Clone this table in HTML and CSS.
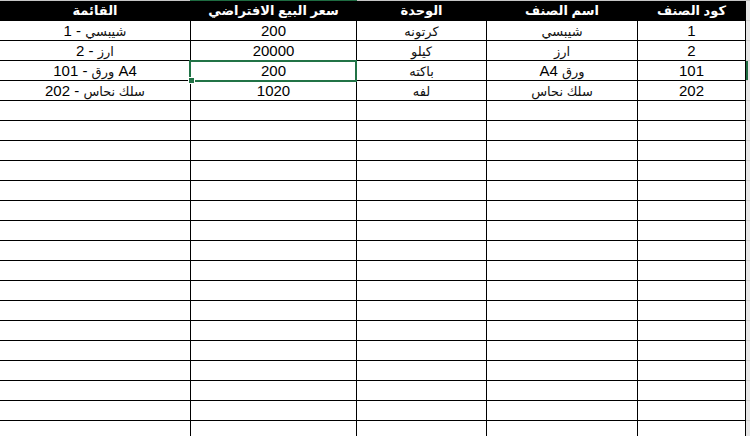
FILE: index.html
```html
<!DOCTYPE html>
<html lang="ar">
<head>
<meta charset="utf-8">
<link rel="stylesheet" href="styles.css">
</head>
<body>
<div class="sheet">
  <div class="colbar">
    <span class="cb cb-a"></span><span class="cb cb-sel"></span><span class="cb cb-b"></span>
  </div>
  <div class="main">
    <div class="grid" dir="rtl">
      <div class="c h">كود الصنف</div>
      <div class="c h">اسم الصنف</div>
      <div class="c h">الوحدة</div>
      <div class="c h">سعر البيع الافتراضي</div>
      <div class="c h last">القائمة</div>

      <div class="c">1</div><div class="c"><span class="ar">شيبسي</span></div><div class="c"><span class="ar">كرتونه</span></div><div class="c">200</div><div class="c last"><span class="ar">شيبسي</span> - 1</div>
      <div class="c">2</div><div class="c"><span class="ar">ارز</span></div><div class="c"><span class="ar">كيلو</span></div><div class="c">20000</div><div class="c last"><span class="ar">ارز</span> - 2</div>
      <div class="c">101</div><div class="c"><span class="ar">ورق</span> A4</div><div class="c"><span class="ar">باكته</span></div><div class="c sel">200<span class="handle"></span></div><div class="c last">A4 <span class="ar">ورق</span> - 101</div>
      <div class="c">202</div><div class="c"><span class="ar">سلك نحاس</span></div><div class="c"><span class="ar">لفه</span></div><div class="c">1020</div><div class="c last"><span class="ar">سلك نحاس</span> - 202</div>

      <div class="c"></div><div class="c"></div><div class="c"></div><div class="c"></div><div class="c last"></div>
      <div class="c"></div><div class="c"></div><div class="c"></div><div class="c"></div><div class="c last"></div>
      <div class="c"></div><div class="c"></div><div class="c"></div><div class="c"></div><div class="c last"></div>
      <div class="c"></div><div class="c"></div><div class="c"></div><div class="c"></div><div class="c last"></div>
      <div class="c"></div><div class="c"></div><div class="c"></div><div class="c"></div><div class="c last"></div>
      <div class="c"></div><div class="c"></div><div class="c"></div><div class="c"></div><div class="c last"></div>
      <div class="c"></div><div class="c"></div><div class="c"></div><div class="c"></div><div class="c last"></div>
      <div class="c"></div><div class="c"></div><div class="c"></div><div class="c"></div><div class="c last"></div>
      <div class="c"></div><div class="c"></div><div class="c"></div><div class="c"></div><div class="c last"></div>
      <div class="c"></div><div class="c"></div><div class="c"></div><div class="c"></div><div class="c last"></div>
      <div class="c"></div><div class="c"></div><div class="c"></div><div class="c"></div><div class="c last"></div>
      <div class="c"></div><div class="c"></div><div class="c"></div><div class="c"></div><div class="c last"></div>
      <div class="c"></div><div class="c"></div><div class="c"></div><div class="c"></div><div class="c last"></div>
      <div class="c"></div><div class="c"></div><div class="c"></div><div class="c"></div><div class="c last"></div>
      <div class="c"></div><div class="c"></div><div class="c"></div><div class="c"></div><div class="c last"></div>
      <div class="c"></div><div class="c"></div><div class="c"></div><div class="c"></div><div class="c last"></div>
      <div class="c"></div><div class="c"></div><div class="c"></div><div class="c"></div><div class="c last"></div>
    </div>
    <div class="rowbar">
      <span class="rb"></span><span class="rb"></span><span class="rb"></span><span class="rb rb-sel"></span>
      <span class="rb"></span><span class="rb"></span><span class="rb"></span><span class="rb"></span>
      <span class="rb"></span><span class="rb"></span><span class="rb"></span><span class="rb"></span>
      <span class="rb"></span><span class="rb"></span><span class="rb"></span><span class="rb"></span>
      <span class="rb"></span><span class="rb"></span><span class="rb"></span><span class="rb"></span>
      <span class="rb"></span><span class="rb"></span>
    </div>
  </div>
</div>
</body>
</html>
```
FILE: styles.css
```css
html, body {
  margin: 0;
  padding: 0;
  background: #fff;
  overflow: hidden;
}
.sheet {
  width: 750px;
  height: 436px;
  overflow: hidden;
  display: flex;
  flex-direction: column;
  font-family: "Liberation Sans", "DejaVu Sans", Arial, sans-serif;
}
.colbar {
  display: flex;
  height: 1px;
  flex: none;
}
.cb { display: block; height: 1px; }
.cb-a { width: 190px; background: #c6c6c6; }
.cb-sel { width: 167px; background: #1e6b41; }
.cb-b { flex: 1; background: #c6c6c6; }
.main {
  display: flex;
  flex: 1;
  min-height: 0;
}
.grid {
  width: 745px;
  flex: none;
  display: grid;
  grid-template-columns: 108px 151px 130px 166px 190px;
  grid-auto-rows: 20px;
  border-right: 1px solid #000;
  align-content: start;
}
.c {
  box-sizing: border-box;
  border-left: 1px solid #000;
  border-bottom: 1px solid #000;
  text-align: center;
  font-size: 15px;
  line-height: 20px;
  color: #000;
  white-space: nowrap;
  position: relative;
}
.c.last { border-left: none; }
.ar {
  font-size: 13px;
  font-weight: normal;
  color: #111;
}
.c.h {
  background: #000;
  color: #fff;
  font-weight: bold;
  font-size: 13px;
  line-height: 19px;
}
.c.sel {
  outline: 2px solid #217346;
  outline-offset: -1px;
  z-index: 2;
}
.handle {
  position: absolute;
  left: -3px;
  bottom: -4px;
  width: 5px;
  height: 5px;
  background: #217346;
  border: 1px solid #fff;
}
.rowbar {
  flex: 1;
  display: flex;
  flex-direction: column;
  background: #e6e6e6;
}
.rb {
  display: block;
  height: 19px;
  border-bottom: 1px solid #d0d0d0;
  flex: none;
}
.rb-sel { background: #1e6b41; width: 2px; }
```
